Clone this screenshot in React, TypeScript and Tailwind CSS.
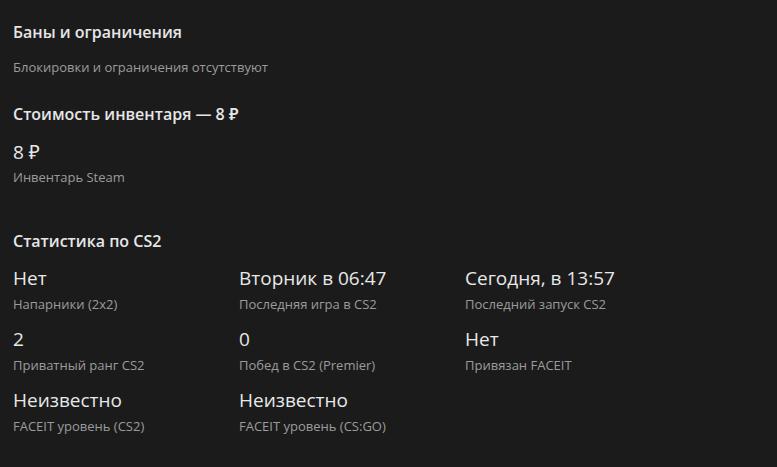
import React from "react";

const font = { fontFamily: '"Open Sans", "Noto Sans", sans-serif' };

function Stat({ value, label }: { value: string; label: string }) {
  return (
    <div className="flex flex-col">
      <div className="text-[19px] leading-[24px] text-[#e8e8e8]">{value}</div>
      <div className="mt-[6px] text-[13px] leading-[16px] text-[#9b9b9b]">{label}</div>
    </div>
  );
}

export default function App() {
  return (
    <div
      className="w-[777px] h-[467px] bg-[#1b1b1c] pl-[13px] pt-[21px] flex flex-col"
      style={font}
    >
      <h2 className="text-[16px] leading-[22px] font-semibold text-[#e6e6e6]">Баны и ограничения</h2>
      <p className="mt-[16px] text-[13px] leading-[16px] text-[#9b9b9b]">
        Блокировки и ограничения отсутствуют
      </p>
      <h2 className="mt-[28px] text-[16px] leading-[22px] font-semibold text-[#e6e6e6]">
        Стоимость инвентаря — 8 ₽
      </h2>
      <div className="mt-[15px]">
        <div className="text-[19px] leading-[24px] text-[#e8e8e8]">8 ₽</div>
        <div className="mt-[5px] text-[13px] leading-[16px] text-[#9b9b9b]">Инвентарь Steam</div>
      </div>
      <h2 className="mt-[45px] text-[16px] leading-[22px] font-semibold text-[#e6e6e6]">
        Статистика по CS2
      </h2>
      <div className="mt-[14px] grid grid-cols-[226px_226px_226px] gap-y-[15px]">
        <Stat value="Нет" label="Напарники (2x2)" />
        <Stat value="Вторник в 06:47" label="Последняя игра в CS2" />
        <Stat value="Сегодня, в 13:57" label="Последний запуск CS2" />
        <Stat value="2" label="Приватный ранг CS2" />
        <Stat value="0" label="Побед в CS2 (Premier)" />
        <Stat value="Нет" label="Привязан FACEIT" />
        <Stat value="Неизвестно" label="FACEIT уровень (CS2)" />
        <Stat value="Неизвестно" label="FACEIT уровень (CS:GO)" />
      </div>
    </div>
  );
}
